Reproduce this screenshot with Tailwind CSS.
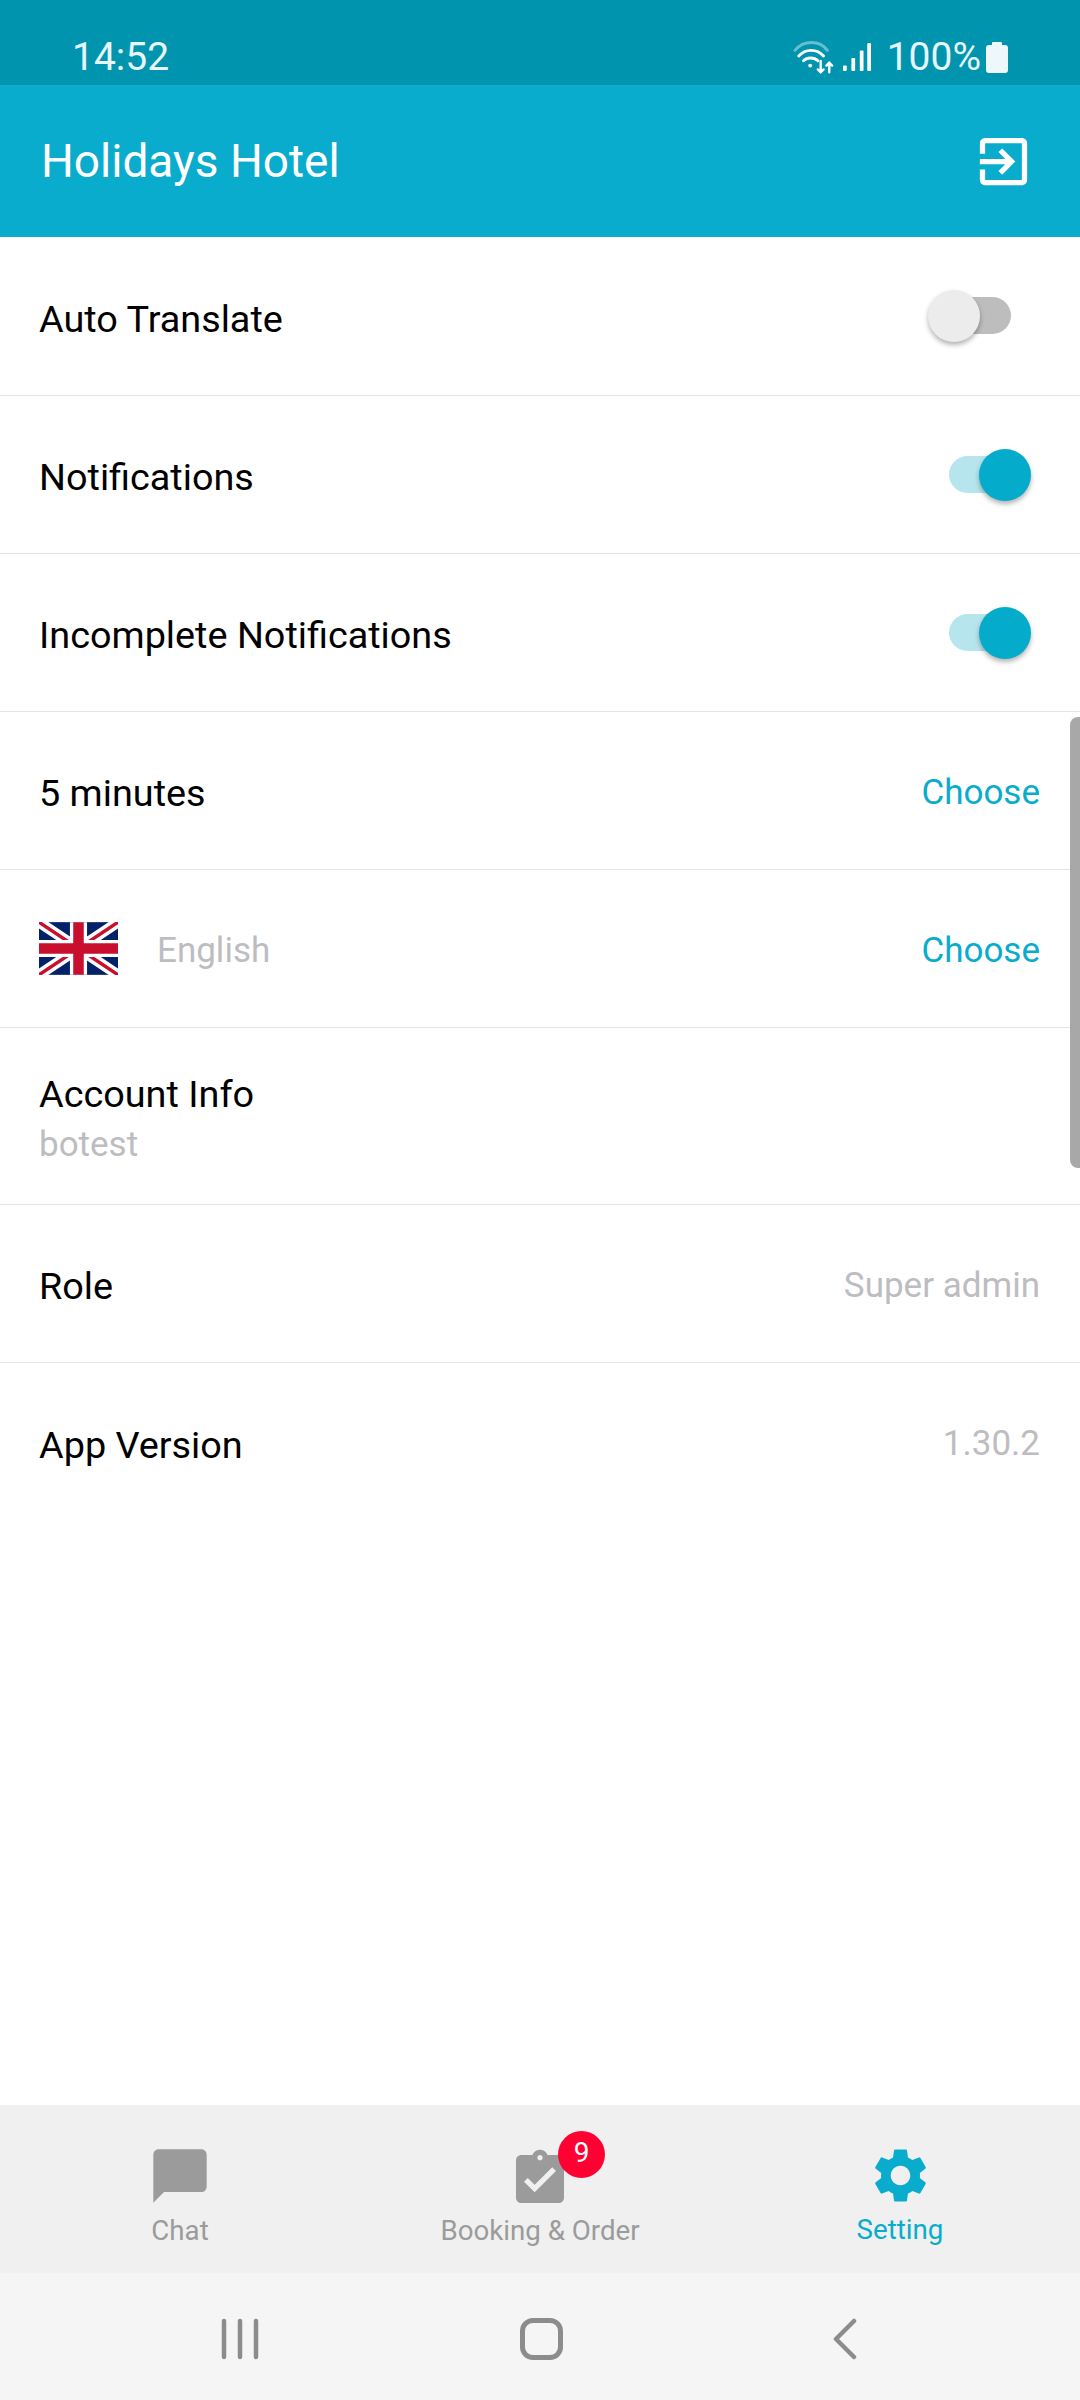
<!DOCTYPE html>
<html lang="en">
<head>
  <meta charset="UTF-8" />
  <meta name="viewport" content="width=device-width, initial-scale=1.0" />
  <title>Settings</title>
  <script src="https://cdn.jsdelivr.net/npm/@tailwindcss/browser@4"></script>
</head>
<body class="bg-white font-['Roboto',sans-serif] text-black">
  <div class="relative flex flex-col w-[1080px] h-[2400px] overflow-hidden">
    <!-- Status bar -->
    <div class="flex items-end justify-between h-[85px] pb-[6px] pl-[72px] pr-[72px] bg-[#0094af] text-[#e6f6f9] text-[39px] leading-[44px]">
      <span>14:52</span>
      <div class="flex items-center h-[44px]">
        <svg class="w-[42px] h-[36px]" viewBox="0 0 44 36" fill="none" stroke="#ffffff" stroke-linecap="round">
          <path d="M2 11C11 0 28 0 36 11" stroke-width="3" opacity="0.4" />
          <path d="M6 17C13 9 25 9 32 17" stroke-width="3" />
          <path d="M11 22C15 18 22 18 26 22" stroke-width="3" />
          <circle cx="18" cy="27" r="2" fill="#ffffff" stroke="none" />
          <path d="M29 22V34M26 31L29 34L32 31" stroke-width="2.5" />
          <path d="M38 34V24M35 27L38 24L41 27" stroke-width="2.5" />
        </svg>
        <svg class="w-[28px] h-[32px] ml-[8px]" viewBox="0 0 30 32" fill="#ffffff">
          <rect x="0" y="25" width="4" height="6" rx="1" />
          <rect x="9" y="17" width="4" height="14" rx="1" />
          <rect x="18" y="9" width="4" height="22" rx="1" />
          <rect x="26" y="1" width="4" height="30" rx="1" />
        </svg>
        <span class="ml-[16px]">100%</span>
        <svg class="w-[22px] h-[32px] ml-[5px]" viewBox="0 0 22 32" fill="#eef8fa">
          <path d="M6 2a1 1 0 0 1 1-1h8a1 1 0 0 1 1 1v2h3a3 3 0 0 1 3 3v22a3 3 0 0 1-3 3H3a3 3 0 0 1-3-3V7a3 3 0 0 1 3-3h3z" />
        </svg>
      </div>
    </div>

    <!-- Header -->
    <header class="flex items-center justify-between h-[152px] pl-[41px] pr-[45px] bg-[#0aaccd] text-white">
      <h1 class="text-[46px] leading-[52px] font-normal">Holidays Hotel</h1>
      <svg class="w-[63px] h-[63px]" viewBox="0 0 24 24" fill="#ffffff">
        <path d="M10.09 15.59L11.5 17l5-5-5-5-1.41 1.41L12.67 11H3v2h9.67l-2.58 2.59zM19 3H5c-1.11 0-2 .9-2 2v4h2V5h14v14H5v-4H3v4c0 1.1.89 2 2 2h14c1.1 0 2-.9 2-2V5c0-1.1-.9-2-2-2z" />
      </svg>
    </header>

    <!-- Settings list -->
    <main class="flex-1 text-[37.8px] leading-[44px]">
      <div class="flex items-center justify-between h-[159px] pl-[39px] pr-[49px] border-b border-[#e4e4e4]">
        <span class="pt-[5px]">Auto Translate</span>
        <div class="relative w-[103px] h-[52px]">
          <div class="absolute left-[21px] top-[7px] w-[62px] h-[37px] rounded-full bg-[#bdbdbd]"></div>
          <div class="absolute left-0 top-0 w-[52px] h-[52px] rounded-full bg-[#ececec] shadow-[0_3px_5px_rgba(0,0,0,0.3)]"></div>
        </div>
      </div>
      <div class="flex items-center justify-between h-[158px] pl-[39px] pr-[49px] border-b border-[#e4e4e4]">
        <span class="pt-[5px]">Notifications</span>
        <div class="relative w-[103px] h-[52px]">
          <div class="absolute left-[21px] top-[7px] w-[62px] h-[37px] rounded-full bg-[#b6e5ee]"></div>
          <div class="absolute left-[51px] top-0 w-[52px] h-[52px] rounded-full bg-[#04abca] shadow-[0_3px_5px_rgba(0,0,0,0.3)]"></div>
        </div>
      </div>
      <div class="flex items-center justify-between h-[158px] pl-[39px] pr-[49px] border-b border-[#e4e4e4]">
        <span class="pt-[5px]">Incomplete Notifications</span>
        <div class="relative w-[103px] h-[52px]">
          <div class="absolute left-[21px] top-[7px] w-[62px] h-[37px] rounded-full bg-[#b6e5ee]"></div>
          <div class="absolute left-[51px] top-0 w-[52px] h-[52px] rounded-full bg-[#04abca] shadow-[0_3px_5px_rgba(0,0,0,0.3)]"></div>
        </div>
      </div>
      <div class="flex items-center justify-between h-[158px] pl-[39px] pr-[40px] border-b border-[#e4e4e4]">
        <span class="pt-[5px]">5 minutes</span>
        <span class="pt-[5px] text-[35px] text-[#0aaccd]">Choose</span>
      </div>
      <div class="flex items-center h-[158px] pl-[39px] pr-[40px] border-b border-[#e4e4e4]">
        <svg class="w-[79px] h-[53px]" viewBox="0 0 60 40">
          <rect width="60" height="40" fill="#012169" />
          <path d="M0 0L60 40M60 0L0 40" stroke="#ffffff" stroke-width="8" />
          <path d="M0 0L60 40M60 0L0 40" stroke="#c8102e" stroke-width="2.6" />
          <path d="M30 0V40M0 20H60" stroke="#ffffff" stroke-width="13" />
          <path d="M30 0V40M0 20H60" stroke="#c8102e" stroke-width="8" />
        </svg>
        <span class="ml-[39px] pt-[5px] text-[35px] text-[#bdbdc1]">English</span>
        <span class="ml-auto pt-[5px] text-[35px] text-[#0aaccd]">Choose</span>
      </div>
      <div class="flex flex-col justify-center h-[177px] pl-[39px] pr-[40px] pt-[4px] border-b border-[#e4e4e4]">
        <span>Account Info</span>
        <span class="mt-[9px] text-[35px] leading-[40px] text-[#bdbdc1]">botest</span>
      </div>
      <div class="flex items-center justify-between h-[158px] pl-[39px] pr-[40px] border-b border-[#e4e4e4]">
        <span class="pt-[5px]">Role</span>
        <span class="pt-[5px] text-[35px] text-[#bdbdc1]">Super admin</span>
      </div>
      <div class="flex items-center justify-between h-[158px] pl-[39px] pr-[40px]">
        <span class="pt-[5px]">App Version</span>
        <span class="pt-[4px] text-[35px] text-[#bdbdc1]">1.30.2</span>
      </div>
    </main>

    <!-- Scroll indicator -->
    <div class="absolute right-0 top-[717px] w-[10px] h-[451px] rounded-l-[8px] bg-[#a8a8a8]"></div>

    <!-- Tab bar -->
    <nav class="grid grid-cols-3 h-[168px] bg-[#f0f0f0] text-[27.7px] leading-[34px] text-[#9b9b9b]">
      <div class="flex flex-col items-center pt-[39px]">
        <svg class="w-[64px] h-[64px]" viewBox="0 0 24 24" fill="#9b9b9b">
          <path d="M20 2H4c-1.1 0-2 .9-2 2v18l4-4h14c1.1 0 2-.9 2-2V4c0-1.1-.9-2-2-2z" />
        </svg>
        <span class="mt-[6px]">Chat</span>
      </div>
      <div class="flex flex-col items-center pt-[42px]">
        <div class="relative w-[64px] h-[64px]">
          <svg class="w-[64px] h-[64px]" viewBox="0 0 24 24" fill="#9b9b9b">
            <path d="M19 3h-4.18C14.4 1.84 13.3 1 12 1c-1.3 0-2.4.84-2.82 2H5c-1.1 0-2 .9-2 2v14c0 1.1.9 2 2 2h14c1.1 0 2-.9 2-2V5c0-1.1-.9-2-2-2zm-7 0c.55 0 1 .45 1 1s-.45 1-1 1-1-.45-1-1 .45-1 1-1zm-2 14l-4-4 1.41-1.41L10 14.17l6.59-6.59L18 9l-8 8z" />
          </svg>
          <div class="absolute left-[50px] top-[-16px] flex items-center justify-center w-[47px] h-[47px] rounded-full bg-[#ff0033] text-white text-[28px] leading-[34px] pb-[4px]">9</div>
        </div>
        <span class="mt-[3px]">Booking &amp; Order</span>
      </div>
      <div class="flex flex-col items-center pt-[38px] text-[#0aaccd]">
        <svg class="w-[65px] h-[65px]" viewBox="0 0 24 24" fill="#0aaccd">
          <path d="M19.14 12.94c.04-.3.06-.61.06-.94 0-.32-.02-.64-.07-.94l2.03-1.58c.18-.14.23-.41.12-.61l-1.92-3.32c-.12-.22-.37-.29-.59-.22l-2.39.96c-.5-.38-1.03-.7-1.62-.94l-.36-2.54c-.04-.24-.24-.41-.48-.41h-3.84c-.24 0-.43.17-.47.41l-.36 2.54c-.59.24-1.13.57-1.62.94l-2.39-.96c-.22-.08-.47 0-.59.22L2.74 8.87c-.12.21-.08.47.12.61l2.03 1.58c-.05.3-.09.63-.09.94s.02.64.07.94l-2.03 1.58c-.18.14-.23.41-.12.61l1.92 3.32c.12.22.37.29.59.22l2.39-.96c.5.38 1.03.7 1.62.94l.36 2.54c.05.24.24.41.48.41h3.84c.24 0 .44-.17.47-.41l.36-2.54c.59-.24 1.13-.56 1.62-.94l2.39.96c.22.08.47 0 .59-.22l1.92-3.32c.12-.22.07-.47-.12-.61l-2.01-1.58zM12 15.6c-1.98 0-3.6-1.62-3.6-3.6s1.62-3.6 3.6-3.6 3.6 1.62 3.6 3.6-1.62 3.6-3.6 3.6z" />
        </svg>
        <span class="mt-[5px]">Setting</span>
      </div>
    </nav>

    <!-- Android nav bar -->
    <div class="flex items-center h-[127px] pl-[221px] pt-[4px] bg-[#f5f5f5]">
      <svg class="w-[38px] h-[42px]" viewBox="0 0 38 42" stroke="#8c8c8c" stroke-width="4.5" stroke-linecap="round">
        <path d="M3 3V39M19 3V39M35 3V39" />
      </svg>
      <div class="ml-[261px] w-[43px] h-[42px] rounded-[13px] border-[5px] border-[#8c8c8c]"></div>
      <svg class="ml-[270px] w-[24px] h-[42px]" viewBox="0 0 24 42" fill="none" stroke="#8c8c8c" stroke-width="4.5" stroke-linecap="round" stroke-linejoin="round">
        <path d="M21 3L3 21L21 39" />
      </svg>
    </div>
  </div>
</body>
</html>
